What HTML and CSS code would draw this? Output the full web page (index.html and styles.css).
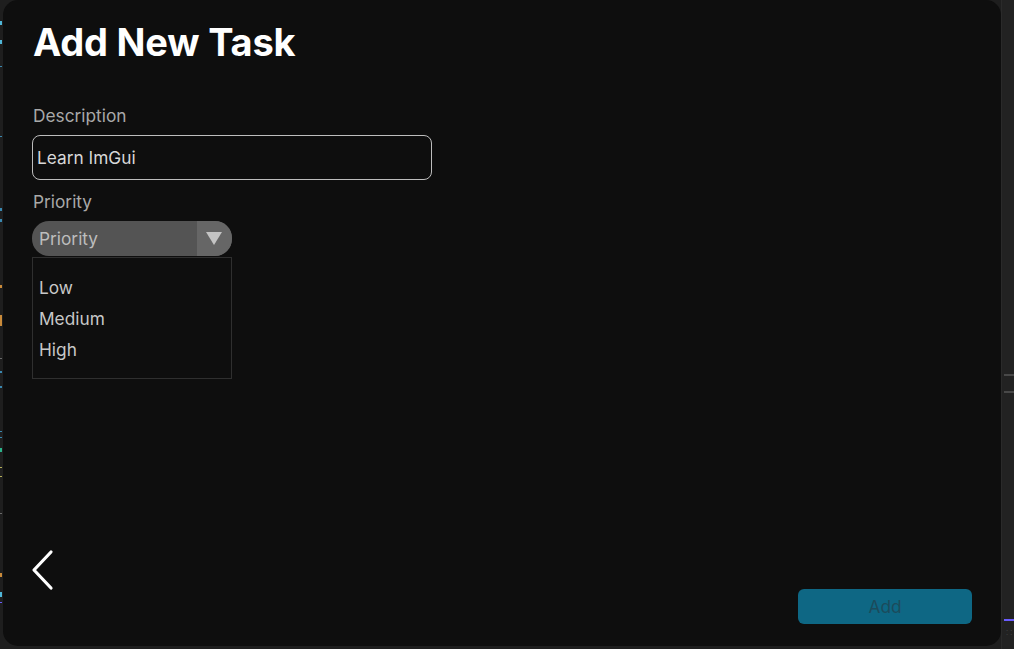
FILE: index.html
```html
<!DOCTYPE html>
<html>
<head>
<meta charset="utf-8">
<link rel="stylesheet" href="styles.css">
</head>
<body>
<div class="screen">
  <div class="edge-left">
    <span class="mark m-cyan" style="margin-top:21px;height:4px"></span>
    <span class="mark m-cyan" style="margin-top:15px;height:4px"></span>
    <span class="mark m-blue" style="margin-top:22px;height:1px"></span>
    <span class="mark m-blue" style="margin-top:69px;height:1px"></span>
    <span class="mark m-blue" style="margin-top:71px;height:3px"></span>
    <span class="mark m-blue" style="margin-top:8px;height:3px"></span>
    <span class="mark m-orange" style="margin-top:63px;height:3px"></span>
    <span class="mark m-orange" style="margin-top:27px;height:11px"></span>
    <span class="mark m-gray" style="margin-top:32px;height:1px"></span>
    <span class="mark m-blue" style="margin-top:12px;height:2px"></span>
    <span class="mark m-blue" style="margin-top:13px;height:2px"></span>
    <span class="mark m-blue" style="margin-top:43px;height:1px"></span>
    <span class="mark m-blue" style="margin-top:5px;height:1px"></span>
    <span class="mark m-green" style="margin-top:10px;height:4px"></span>
    <span class="mark m-yellow" style="margin-top:15px;height:1px"></span>
    <span class="mark m-yellow" style="margin-top:8px;height:1px"></span>
    <span class="mark m-gray" style="margin-top:36px;height:1px"></span>
    <span class="mark m-orange" style="margin-top:59px;height:4px"></span>
    <span class="mark m-cyan" style="margin-top:15px;height:5px"></span>
    <span class="mark m-purple" style="margin-top:5px;height:1px"></span>
  </div>
  <div class="modal">
    <h1 class="title">Add New Task</h1>
    <div class="form">
      <label class="label">Description</label>
      <div class="input">Learn ImGui</div>
      <label class="label label-priority">Priority</label>
      <div class="select">
        <span class="select-text">Priority</span>
        <span class="select-arrow">
          <svg width="16" height="14" viewBox="0 0 16 14"><polygon points="0,0 16,0 8,13" fill="#c4c4c4"/></svg>
        </span>
      </div>
      <div class="options">
        <div class="option">Low</div>
        <div class="option">Medium</div>
        <div class="option">High</div>
      </div>
    </div>
    <div class="footer">
      <button class="back" aria-label="Back">
        <svg width="24" height="42" viewBox="0 0 24 42"><polyline points="20,3 3,21 20,39" fill="none" stroke="#ffffff" stroke-width="3.2" stroke-linecap="round" stroke-linejoin="round"/></svg>
      </button>
      <button class="add">Add</button>
    </div>
  </div>
  <div class="edge-right">
    <span class="rline" style="margin-top:374px"></span>
    <span class="rline" style="margin-top:15px"></span>
    <span class="rpurple"></span>
    <span class="rdots">∷</span>
  </div>
</div>
</body>
</html>
```

FILE: styles.css
```css
* { box-sizing: border-box; }
html, body {
  margin: 0;
  padding: 0;
  background: #1e1e1e;
  width: 1014px;
  height: 649px;
  overflow: hidden;
  font-family: Inter, "Noto Sans", sans-serif;
}
.screen {
  display: flex;
  width: 1014px;
  height: 649px;
}
.edge-left {
  width: 3px;
  flex: none;
  display: flex;
  flex-direction: column;
}
.mark { display: block; width: 2px; flex: none; }
.m-cyan { background: #4fb6d8; }
.m-blue { background: #3a88b0; }
.m-orange { background: #c98a3a; }
.m-gray { background: #6a6a6a; }
.m-green { background: #2bb38a; }
.m-yellow { background: #b6b05a; }
.m-purple { background: #6a5cff; }

.modal {
  width: 998px;
  height: 646px;
  flex: none;
  background: #0e0e0e;
  border-radius: 15px;
  padding: 0 33px 0 30px;
  display: flex;
  flex-direction: column;
}
.title {
  margin: 21px 0 0 0;
  font-size: 38px;
  line-height: 42px;
  font-weight: 700;
  color: #ffffff;
  letter-spacing: -0.2px;
}
.form {
  display: flex;
  flex-direction: column;
  align-items: flex-start;
  margin-top: 42px;
}
.label {
  font-size: 17.3px;
  line-height: 22px;
  color: #a9a9a9;
}
.input {
  margin-top: 8px;
  width: 400px;
  height: 45px;
  margin-left: -1px;
  border: 1px solid #bdbdbd;
  border-radius: 8px;
  padding: 0 0 0 4px;
  display: flex;
  align-items: center;
  font-size: 17.3px;
  color: #d8d8d8;
}
.label-priority { margin-top: 11px; }
.select {
  margin-top: 8px;
  margin-left: -1px;
  width: 200px;
  height: 35px;
  border-radius: 17px;
  background: #545454;
  display: flex;
  overflow: hidden;
}
.select-text {
  flex: 1;
  padding-left: 7px;
  display: flex;
  align-items: center;
  font-size: 17.3px;
  color: #bdbdbd;
}
.select-arrow {
  width: 35px;
  background: #666666;
  display: flex;
  align-items: center;
  justify-content: center;
  padding-top: 1px;
  padding-right: 2px;
}
.options {
  margin-top: 1px;
  margin-left: -1px;
  width: 200px;
  height: 122px;
  border: 1px solid #2f2f2f;
  background: #0e0e0e;
  padding: 14px 0 0 6px;
}
.option {
  font-size: 17.3px;
  line-height: 31px;
  color: #c8c8c8;
}
.footer {
  margin-top: auto;
  margin-bottom: 22px;
  display: flex;
  align-items: flex-end;
  justify-content: space-between;
}
.back {
  background: none;
  border: none;
  padding: 0;
  margin: 0 0 33px -2px;
  width: 24px;
  height: 42px;
  display: block;
}
.back svg { display: block; }
.add {
  width: 174px;
  height: 35px;
  margin-right: -4px;
  border: none;
  border-radius: 6px;
  background: #0e6784;
  color: #1c4b5b;
  font-family: Inter, "Noto Sans", sans-serif;
  font-size: 17.3px;
  padding: 0;
}
.edge-right {
  flex: 1;
  display: flex;
  flex-direction: column;
  align-items: stretch;
  padding-left: 2px;
  background: #222222;
  border-left: 1px solid #2a2a2a;
}
.rline { display: block; height: 2px; background: #484848; }
.rpurple { display: block; height: 2px; background: #6a5cff; margin-top: 226px; }
.rdots { display: block; color: #3a3a3a; font-size: 10px; line-height: 10px; margin-top: 6px; padding-left: 2px; }
```
